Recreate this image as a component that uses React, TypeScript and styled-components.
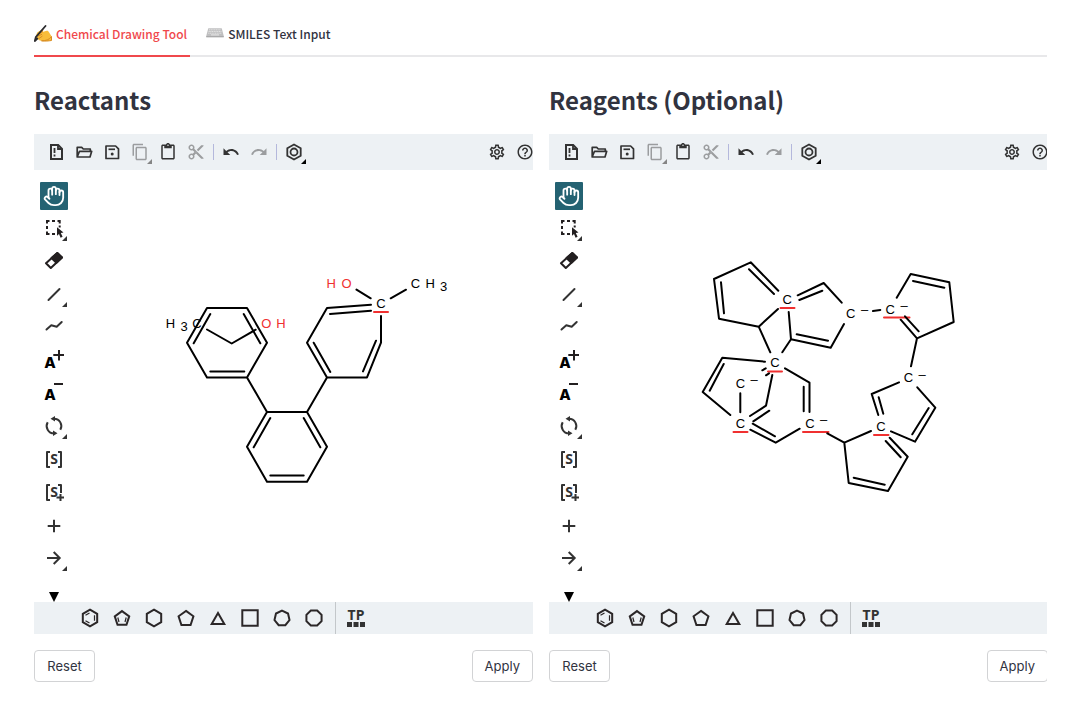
import React from "react";
import styled, { createGlobalStyle } from "styled-components";
import { Hand } from "lucide-react";
import {
  MdContentCopy,
  MdContentCut,
  MdContentPaste,
  MdHelpOutline,
  MdOutlineSettings,
  MdRedo,
  MdUndo,
} from "react-icons/md";

const ink = "#333333";
const alertRed = "#f03030";
const sourceSans = '"Noto Sans CJK JP", "Noto Sans", sans-serif';

const GlobalStyle = createGlobalStyle`
  *, *::before, *::after { box-sizing: border-box; }
  body { margin: 0; background: #ffffff; color: #31333f; font-family: ${sourceSans}; }
  button { font: inherit; color: inherit; margin: 0; cursor: pointer; }
`;

const Page = styled.main`
  padding: 12px 33px 16px 34px;
`;

const TabList = styled.div`
  display: flex;
  gap: 16px;
  height: 45px;
  box-shadow: inset 0 -2px 0 #e8e8ea;
`;

const Tab = styled.button<{ $active?: boolean }>`
  display: flex;
  align-items: center;
  gap: 4px;
  padding: 0 3px 0 0;
  border: 0;
  border-bottom: 2px solid ${(p) => (p.$active ? "#f0484c" : "transparent")};
  background: none;
  color: ${(p) => (p.$active ? "#f0484c" : "#31333f")};
  font-size: 12px;
  font-weight: 500;
  line-height: 20px;
  white-space: nowrap;
`;

/* The editors are one pixel wider than the page column and get cut at its edge. */
const Clip = styled.div`
  overflow: hidden;
`;

const Columns = styled.div`
  display: grid;
  grid-template-columns: 1fr 1fr;
  gap: 16px;
  margin-right: -1px;
`;

const Column = styled.section`
  min-width: 0;
`;

const Heading = styled.h2`
  margin: 0;
  padding: 25px 0 16px;
  font-size: 24px;
  font-weight: 700;
  line-height: 36px;
`;

const Editor = styled.div`
  overflow: hidden;
`;

const TopBar = styled.div`
  display: flex;
  align-items: center;
  height: 36px;
  padding-left: 8px;
  background: #edf1f4;
`;

const Spring = styled.div`
  flex: 1;
`;

const TopBarEnd = styled.div`
  display: flex;
  flex: none;
  margin-right: -6px;
`;

const ToolButton = styled.button<{ $active?: boolean; $muted?: boolean }>`
  position: relative;
  display: flex;
  flex: none;
  align-items: center;
  justify-content: center;
  width: 28px;
  height: 28px;
  padding: 0;
  border: 0;
  border-radius: 1px;
  background: ${(p) => (p.$active ? "#246272" : "transparent")};
  color: ${(p) => (p.$active ? "#ffffff" : p.$muted ? "#9b9d9f" : ink)};
`;

const Corner = styled.span<{ $tone: string }>`
  position: absolute;
  right: 1px;
  bottom: 2px;
  border-bottom: 5px solid ${(p) => p.$tone};
  border-left: 5px solid transparent;

  ${TopBar} & {
    right: 2px;
  }
`;

const Divider = styled.span`
  flex: none;
  width: 1px;
  height: 16px;
  margin: 0 3px;
  background: #b4b8dc;
`;

const Workspace = styled.div`
  display: flex;
  min-height: 432px;
`;

const Rail = styled.div`
  display: flex;
  flex: none;
  flex-direction: column;
  align-items: center;
  gap: 5px;
  width: 40px;
  padding: 12px 0 0;
`;

const MoreButton = styled.button`
  display: flex;
  margin-top: auto;
  padding: 0;
  border: 0;
  background: none;
`;

const Canvas = styled.svg`
  flex: 1;
  min-width: 0;
  align-self: stretch;
`;

const BottomBar = styled.div`
  display: flex;
  align-items: center;
  height: 32px;
  padding-left: 40px;
  background: #edf1f4;
`;

const TemplateButton = styled.button`
  display: flex;
  flex: none;
  align-items: center;
  justify-content: center;
  width: 32px;
  height: 32px;
  padding: 0;
  border: 0;
  background: none;
  color: #2b2728;
`;

const TemplateDivider = styled.span`
  width: 1px;
  height: 32px;
  margin: 0 4px 0 5px;
  background: #c3c7ca;
`;

const Actions = styled.div`
  display: flex;
  justify-content: space-between;
  padding-top: 16px;
`;

const ActionButton = styled.button`
  min-width: 61px;
  height: 32px;
  padding: 0 12px;
  border: 1px solid #d2d3d5;
  border-radius: 4px;
  background: #ffffff;
  font-family: Inter, sans-serif;
  font-size: 13px;
  line-height: 20px;
`;

const Bond = styled.path`
  fill: none;
  stroke: #000000;
  stroke-width: 2;
  stroke-linecap: round;
  stroke-linejoin: round;
`;

const Warning = styled.path`
  fill: none;
  stroke: ${alertRed};
  stroke-width: 2;
  stroke-linecap: round;
`;

const Atom = styled.text<{ $tone?: string }>`
  fill: ${(p) => p.$tone || "#000000"};
  font-family: "Liberation Sans", Arial, sans-serif;
  font-size: 13px;
  text-anchor: middle;
`;

const GlyphText = styled.text`
  fill: currentColor;
  font-family: Inter, sans-serif;
  font-weight: 800;
  font-size: 15px;
  text-anchor: middle;
`;

const BracketText = styled(GlyphText)`
  font-family: "Noto Sans", sans-serif;
  font-weight: 700;
  font-size: 14px;
`;

/* ---------- tab icons ---------- */

const WritingHandIcon = () => (
  <svg width="18" height="18" viewBox="0 0 18 18" aria-hidden="true">
    <path d="M3.5 7.2 8 4.6c1-.5 1.8.2 1.2 1L8.5 7l4-1.2c1.4-.3 2 .4 2.5 1.4l2.5 4v4.3c-3 .4-6.5.9-10 .3-2.5-.4-3.5-2-5.3-2.4-.6-.5-.3-1.2.3-1.5-.7-1.6.2-3.3 1-4.7z" fill="#f8bd3a" />
    <path d="M5 8.8 9 6.500M4 11l4-1.700M5 13.500 8.500 11M17.500 11.500v4c-3 .4-6 .9-10 .3 4 0 8-1 10-4.300z" fill="none" stroke="#d98d22" strokeWidth="1" />
    <path d="M11.5 1 1.8 12.2.8 16l2.6-2.5" fill="none" stroke="#2b2b2e" strokeWidth="1.8" strokeLinejoin="round" strokeLinecap="round" />
  </svg>
);

const KeyboardIcon = () => (
  <svg width="18" height="18" viewBox="0 0 18 18" aria-hidden="true">
    <path d="M2.3 3.3h13.4l2 7.5v1.4H.3v-1.4z" fill="#bfbfc0" />
    <path d="M.3 11h17.4v1.2H.3z" fill="#a9a9aa" />
    <path d="M3 4.8h12M2.6 6.5h12.8M2.2 8.2h13.6" stroke="#e2e2e2" strokeWidth="1" strokeDasharray="1.2 .5" />
    <path d="M5 9.9h8" stroke="#e6e6e6" strokeWidth="1" />
  </svg>
);

/* ---------- toolbar icons ---------- */

type IconProps = { box?: number; children: React.ReactNode; width?: number };

const StrokeIcon = ({ box = 24, width = 2, children }: IconProps) => (
  <svg
    width={box}
    height={box}
    viewBox={`0 0 ${box} ${box}`}
    fill="none"
    stroke="currentColor"
    strokeWidth={width}
    aria-hidden="true"
  >
    {children}
  </svg>
);

const NewIcon = () => (
  <StrokeIcon>
    <path d="M7 5h7.2L18 8.8V19H7z" />
    <path d="M10.5 8v5M10.5 14.5v2M14 5v4h4" strokeWidth="1.8" />
  </StrokeIcon>
);

const OpenIcon = () => (
  <StrokeIcon width={1.7}>
    <path d="M5.2 17V7.4h4.5l1.6 1.6h7v2.3M5.2 17 7.5 11.3h12.2L18 17z" strokeLinejoin="round" />
  </StrokeIcon>
);

const SaveIcon = () => (
  <StrokeIcon width={1.7}>
    <path d="M6 6h9.6L18.5 8.9V18.5H6z" strokeLinejoin="round" />
    <path d="M8.5 9.3h6.5" />
    <circle cx="12.2" cy="14" r="1.5" fill="currentColor" stroke="none" />
  </StrokeIcon>
);

const AromaticIcon = () => (
  <StrokeIcon width={1.8}>
    <path d="M12 4.5 18.7 8.3v7.4L12 19.5l-6.7-3.8V8.3z" />
    <circle cx="12" cy="12" r="3.5" />
  </StrokeIcon>
);

const SelectIcon = () => (
  <StrokeIcon box={28}>
    <path
      d="M7 8.5V6h2.5M12 6h3M17.5 6h2.2v2.5M7 11v3M7 16.5V19h2.5M12 19h3M19.7 10.5v2"
      stroke="#231f20"
    />
    <path d="m17 12.2 6.5 5.3-2.7.5 1.8 3.8-2 .9-1.6-3.8-2 1.9z" fill="#231f20" stroke="none" />
  </StrokeIcon>
);

const EraserIcon = () => (
  <StrokeIcon box={28}>
    <path d="M17.3 5 22 9.5 10.8 20 6 15.2z" stroke="#231f20" strokeLinejoin="round" />
    <path d="M17.3 5 22 9.5l-5.6 5.3-4.9-4.7z" fill="#231f20" stroke="#231f20" strokeLinejoin="round" />
  </StrokeIcon>
);

const LineIcon = () => (
  <StrokeIcon box={28}>
    <path d="M8.5 19 19.5 8" strokeLinecap="round" />
  </StrokeIcon>
);

const ChainIcon = () => (
  <StrokeIcon box={28}>
    <path d="m6.5 15.5 4.8-4.2 5.4 1.4 5-4.7" strokeLinecap="round" strokeLinejoin="round" />
  </StrokeIcon>
);

const ChargeIcon = ({ plus }: { plus?: boolean }) => (
  <svg width="28" height="28" viewBox="0 0 28 28" aria-hidden="true" color="#000000">
    <GlyphText x="10" y={plus ? 21 : 20}>A</GlyphText>
    <path d={plus ? "M13.3 8H24M19 3v10.5" : "M14 4h9"} stroke="#231f20" strokeWidth="2" />
  </svg>
);

const RotateIcon = () => (
  <StrokeIcon box={28}>
    <path d="M14 5.7A7.3 7.3 0 0 1 20.3 16.7M14 20.3A7.3 7.3 0 0 1 7.7 9.3" />
    <path d="M15 3v5.4L10.5 5.7zM13 17.6V23l4.5-2.7z" fill="currentColor" stroke="none" />
  </StrokeIcon>
);

const BracketIcon = ({ plus }: { plus?: boolean }) => (
  <svg width="28" height="28" viewBox="0 0 28 28" aria-hidden="true">
    <path
      d={plus ? "M10 6H7v15h3M18 6h3v8M16.5 18.5H24M20.5 15v7" : "M10 6H7v15h3M18 6h3v15h-3"}
      fill="none"
      stroke="currentColor"
      strokeWidth="2"
      strokeLinejoin="round"
    />
    <BracketText x="14" y="18">S</BracketText>
  </svg>
);

const PlusIcon = () => (
  <StrokeIcon box={28}>
    <path d="M7.7 14h12.6M14 7.7v12.6" />
  </StrokeIcon>
);

const ArrowIcon = () => (
  <StrokeIcon box={28}>
    <path d="M7 13h12.5M13.7 7l6 6-6 6" />
  </StrokeIcon>
);

/* ---------- ring templates ---------- */

const ring = (sides: number, radius: number, turn = -90, cy = 12) =>
  Array.from({ length: sides }, (_, i) => {
    const a = ((turn + (360 / sides) * i) * Math.PI) / 180;
    return `${(12 + radius * Math.cos(a)).toFixed(2)},${(cy + radius * Math.sin(a)).toFixed(2)}`;
  }).join(" ");

const Ring = ({ points, inner }: { points: string; inner?: string }) => (
  <StrokeIcon>
    <polygon points={points} />
    {inner && <path d={inner} strokeWidth="1.2" />}
  </StrokeIcon>
);

const templates = [
  { name: "Benzene", points: ring(6, 8.3), inner: "M7.5 9.3 11.5 7M16.5 9.3v5.4M7.5 14.7l4 2.3" },
  { name: "Cyclopentadiene", points: ring(5, 7.6, -90, 12.7), inner: "M7.8 11.5l1.2 4.5M16.2 11.5 15 16" },
  { name: "Cyclohexane", points: ring(6, 8.3) },
  { name: "Cyclopentane", points: ring(5, 7.8, -90, 12.7) },
  { name: "Cyclopropane", points: "12,7 18.3,18 5.7,18" },
  { name: "Cyclobutane", points: "4.3,4.3 19.7,4.3 19.7,19.7 4.3,19.7" },
  { name: "Cycloheptane", points: ring(7, 7.7, -90, 12.3) },
  { name: "Cyclooctane", points: ring(8, 8.2, -67.5) },
];

const TemplateLibraryIcon = () => (
  <svg width="28" height="32" viewBox="0 0 28 32" aria-hidden="true" color={ink}>
    <BracketText x="14" y="18">TP</BracketText>
    <path d="M5 20h5v5H5zM11.500 20h5v5h-5zM18 20h5v5h-5z" fill={ink} />
  </svg>
);

/* ---------- drawings ---------- */

type Label = [string, number, number, string?];
type Drawing = { dx: number; dy: number; bonds: string; warnings: string; labels: Label[] };

const reactants: Drawing = {
  dx: 76,
  dy: 90,
  bonds: `M57 48H97L117 82.7 97 117.4H57L37 82.7Z
    M60.3 54 43.7 83.3 M93.7 54 110.3 83.3 M60.3 111.5H94.3
    M97 117.4 117 152H157L177 186.7 157 221.7H117L97 186.7 117 152
    M120.3 158 103.7 187.3 M153.7 158 170.3 187.3 M120.3 215.5H153.7
    M157 152 177 117.4H217L231 82.7V56
    M177 117.4 157 82.7 177 48 221 44.7 M180 54 221 50.7
    M163.7 82.7 180.3 112 M226 80.7 213 111.4
    M206.5 29.6 220.7 38.3 M240.7 38.3 256 29.7
    M57 69.5 81.7 83.5 105.7 69.7`,
  warnings: "M224 52H238",
  labels: [
    ["H", 20.5, 68],
    ["3", 34, 71],
    ["C", 47, 68],
    ["O", 116.3, 68, alertRed],
    ["H", 131, 68, alertRed],
    ["H", 181.3, 28, alertRed],
    ["O", 196.5, 28, alertRed],
    ["C", 265.5, 28],
    ["H", 280.3, 28],
    ["3", 293.5, 31],
    ["C", 231, 48],
  ],
};

const reagents: Drawing = {
  dx: 101,
  dy: 80,
  bonds: `M88.3 40.7 60.7 12.3 24 29 29 68.7 68.7 76.7 88 59
    M59 19.3 84 44 M31 32.3 34 63.3
    M107.7 45.3 133.7 33 151.7 52.7 M109.3 50 132.3 40.7
    M154 74 140.7 97.7 101 89.3 98.7 62 M138 90.7 106.7 84.3
    M183 61 190.3 60
    M206.7 47.7 220.7 24 259.3 32.3 263.7 72 227 88.3 210.7 69.7
    M215 66.3 228.7 81.3 M223 31 254.3 37.7 M227 88.3 221 116.3
    M68.7 76.7 80.3 102.3 M101 89.3 92.3 102.3
    M75 111.7 32.3 107.7 12.7 142 40.3 165 M33.7 114 19.7 140.7
    M72.3 120.3 75.7 118.3 M76 125.3 79 123.3
    M50.3 143.3V162.3 M82.3 125 76 155.7 60 166 M79.3 160.7 63.3 171.3
    M95 118.3 119.5 132.7V162 M113.7 136.7V161.3
    M109.7 178.7 85.7 192.7 60.3 179.7 M85 186.3 62.7 173.7
    M137.3 183.3 154.3 192.7
    M181 181 154.3 192.7 158.7 233 198 241 217.7 206.7 199.7 187.7
    M195.7 191 210.7 207.3 M163.7 227.7 194.7 234.7
    M209 132.3 181.7 144 188.3 165 M188.7 147.3 193.3 163.7
    M227.3 137.3 245.3 157.7 225 191.7 201 181.3 M238.7 158 222.3 184.3`,
  warnings: `M90.5 58H104.5 M194 67.5H219.5 M78 121.5H92 M43.5 182H57.5
    M113 182H138.5 M184 185H198.5`,
  labels: [
    ["C", 97.3, 54],
    ["C", 160.7, 68],
    ["–", 174.5, 64],
    ["C", 200.3, 63.5],
    ["–", 214, 60],
    ["C", 218.5, 132],
    ["–", 232, 129],
    ["C", 85, 117],
    ["C", 50.5, 138],
    ["–", 64, 134],
    ["C", 50.5, 178],
    ["C", 120, 178],
    ["–", 133.5, 174],
    ["C", 191, 181],
  ],
};

const Molecule = ({ drawing, title }: { drawing: Drawing; title: string }) => (
  <Canvas role="img" aria-label={title}>
    <g transform={`translate(${drawing.dx} ${drawing.dy})`}>
      <Warning d={drawing.warnings} />
      <Bond d={drawing.bonds} />
      {drawing.labels.map(([symbol, x, y, tone], i) => (
        <Atom key={i} x={x} y={y} $tone={tone}>
          {symbol}
        </Atom>
      ))}
    </g>
  </Canvas>
);

/* ---------- editor ---------- */

const railTools = [
  { name: "Hand tool", icon: <Hand size={22} strokeWidth={2} />, active: true },
  { name: "Rectangle selection", icon: <SelectIcon />, more: true },
  { name: "Erase", icon: <EraserIcon /> },
  { name: "Single bond", icon: <LineIcon />, more: true },
  { name: "Chain", icon: <ChainIcon /> },
  { name: "Charge plus", icon: <ChargeIcon plus /> },
  { name: "Charge minus", icon: <ChargeIcon /> },
  { name: "Rotate", icon: <RotateIcon />, more: true },
  { name: "S-Group", icon: <BracketIcon /> },
  { name: "Data S-Group", icon: <BracketIcon plus /> },
  { name: "Reaction plus", icon: <PlusIcon /> },
  { name: "Reaction arrow", icon: <ArrowIcon />, more: true },
];

const StructureEditor = ({ title, drawing }: { title: string; drawing: Drawing }) => (
  <Column>
    <Heading>{title}</Heading>
    <Editor>
      <TopBar>
        <ToolButton aria-label="Clear canvas"><NewIcon /></ToolButton>
        <ToolButton aria-label="Open"><OpenIcon /></ToolButton>
        <ToolButton aria-label="Save"><SaveIcon /></ToolButton>
        <ToolButton aria-label="Copy" $muted>
          <MdContentCopy size={18} />
          <Corner $tone="#858585" />
        </ToolButton>
        <ToolButton aria-label="Paste"><MdContentPaste size={18} /></ToolButton>
        <ToolButton aria-label="Cut" $muted><MdContentCut size={18} /></ToolButton>
        <Divider />
        <ToolButton aria-label="Undo"><MdUndo size={18} /></ToolButton>
        <ToolButton aria-label="Redo" $muted><MdRedo size={18} /></ToolButton>
        <Divider />
        <ToolButton aria-label="Aromatize">
          <AromaticIcon />
          <Corner $tone="#000000" />
        </ToolButton>
        <Spring />
        <TopBarEnd>
          <ToolButton aria-label="Settings"><MdOutlineSettings size={18} /></ToolButton>
          <ToolButton aria-label="Help"><MdHelpOutline size={18} /></ToolButton>
        </TopBarEnd>
      </TopBar>
      <Workspace>
        <Rail>
          {railTools.map((tool) => (
            <ToolButton key={tool.name} aria-label={tool.name} $active={tool.active}>
              {tool.icon}
              {tool.more && <Corner $tone={ink} />}
            </ToolButton>
          ))}
          <MoreButton aria-label="More tools">
            <svg width="10" height="10" viewBox="0 0 10 10" aria-hidden="true">
              <path d="M0 0h10L5 10z" fill="#000000" />
            </svg>
          </MoreButton>
        </Rail>
        <Molecule drawing={drawing} title={title} />
      </Workspace>
      <BottomBar>
        {templates.map((t) => (
          <TemplateButton key={t.name} aria-label={t.name}>
            <Ring points={t.points} inner={t.inner} />
          </TemplateButton>
        ))}
        <TemplateDivider />
        <TemplateButton aria-label="Template library">
          <TemplateLibraryIcon />
        </TemplateButton>
      </BottomBar>
    </Editor>
    <Actions>
      <ActionButton>Reset</ActionButton>
      <ActionButton>Apply</ActionButton>
    </Actions>
  </Column>
);

export default function App() {
  return (
    <Page>
      <GlobalStyle />
      <TabList role="tablist">
        <Tab role="tab" aria-selected="true" $active>
          <WritingHandIcon />
          Chemical Drawing Tool
        </Tab>
        <Tab role="tab" aria-selected="false">
          <KeyboardIcon />
          SMILES Text Input
        </Tab>
      </TabList>
      <Clip>
        <Columns>
          <StructureEditor title="Reactants" drawing={reactants} />
          <StructureEditor title="Reagents (Optional)" drawing={reagents} />
        </Columns>
      </Clip>
    </Page>
  );
}
